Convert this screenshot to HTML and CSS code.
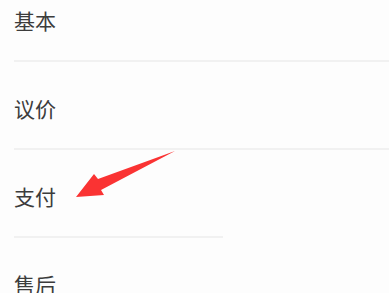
FILE: index.html
```html
<!DOCTYPE html>
<html lang="zh-CN">

<head>
    <meta charset="UTF-8">
    <meta name="viewport" content="width=device-width, initial-scale=1.0">
    <title>设置</title>
    <link rel="stylesheet" href="styles.css">
</head>

<body>
    <div class="page">
        <ul class="menu">
            <li class="menu-item">基本</li>
            <li class="menu-item">议价</li>
            <li class="menu-item menu-item-short">支付</li>
            <li class="menu-item">售后</li>
        </ul>

        <svg class="arrow" width="389" height="293" viewBox="0 0 389 293">
            <polygon points="76,197 94,174 98,179 175,151 101,190 104,195" fill="#fa3333" />
        </svg>
    </div>
</body>

</html>
```

FILE: styles.css
```css
* {
    box-sizing: border-box;
    margin: 0;
    padding: 0;
    font-family: "Noto Sans CJK SC", "Noto Sans", sans-serif;
}

body {
    background: #fdfdfd;
    overflow: hidden;
}

.page {
    position: relative;
    width: 389px;
    height: 293px;
    overflow: hidden;
}

.menu {
    list-style: none;
    margin-top: -26px;
}

.menu-item {
    height: 88px;
    margin-left: 14px;
    padding-top: 31px;
    font-size: 21px;
    line-height: 30px;
    color: #3c3c3c;
    border-bottom: 2px solid #f1f1f1;
}

.menu-item-short {
    margin-right: 166px;
}

.arrow {
    position: absolute;
    top: 0;
    left: 0;
}
```
